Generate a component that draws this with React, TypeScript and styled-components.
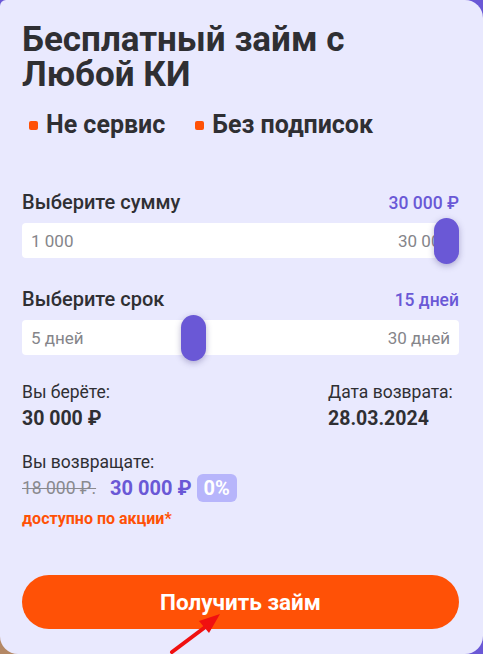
import React, { useState } from "react";
import styled, { createGlobalStyle } from "styled-components";

const GlobalStyle = createGlobalStyle`
  * { box-sizing: border-box; }
  html, body { margin: 0; padding: 0; }
  body {
    font-family: Roboto, "Noto Sans", "Liberation Sans", sans-serif;
    background: #6a58d6;
  }
`;

const ACCENT = "#6a58d6";
const ORANGE = "#ff5106";
const DARK = "#2f2f33";

interface RangeProps {
  label: string;
  value: string;
  min: string;
  max: string;
  percent: number;
}

const RangeField: React.FC<RangeProps> = ({ label, value, min, max, percent }) => (
  <RangeBlock>
    <RangeHead>
      <RangeLabel>{label}</RangeLabel>
      <RangeValue>{value}</RangeValue>
    </RangeHead>
    <Track>
      <TrackText>{min}</TrackText>
      <TrackText>{max}</TrackText>
      <Thumb style={{ left: `calc(${percent}% - ${(percent / 100) * 25}px)` }} />
    </Track>
  </RangeBlock>
);

const App: React.FC = () => {
  const [sum] = useState(100);
  const [term] = useState(38.5);

  return (
    <>
      <GlobalStyle />
      <Page>
        <Card>
          <Title>
            Бесплатный займ с<br />
            Любой КИ
          </Title>
          <Features>
            <Feature>Не сервис</Feature>
            <Feature>Без подписок</Feature>
          </Features>

          <RangeField
            label="Выберите сумму"
            value="30 000 ₽"
            min="1 000"
            max="30 000"
            percent={sum}
          />
          <RangeField
            label="Выберите срок"
            value="15 дней"
            min="5 дней"
            max="30 дней"
            percent={term}
          />

          <Summary>
            <SummaryCol>
              <SummaryLabel>Вы берёте:</SummaryLabel>
              <SummaryValue>30 000 ₽</SummaryValue>
            </SummaryCol>
            <SummaryCol>
              <SummaryLabel>Дата возврата:</SummaryLabel>
              <SummaryValue>28.03.2024</SummaryValue>
            </SummaryCol>
          </Summary>

          <ReturnBlock>
            <SummaryLabel>Вы возвращате:</SummaryLabel>
            <PriceRow>
              <OldPrice>18 000 ₽.</OldPrice>
              <NewPrice>30 000 ₽</NewPrice>
              <Badge>0%</Badge>
            </PriceRow>
            <Promo>доступно по акции*</Promo>
          </ReturnBlock>

          <SubmitButton type="button">Получить займ</SubmitButton>
          <Arrow width="60" height="48" viewBox="0 0 60 48">
            <line x1="4" y1="44" x2="40" y2="17" stroke="#f01010" strokeWidth="4" strokeLinecap="round" />
            <polygon points="52,6 31,13 41,25" fill="#f01010" />
          </Arrow>
        </Card>
      </Page>
    </>
  );
};

const Page = styled.div`
  width: 483px;
  height: 654px;
  background: linear-gradient(45deg, #b48865 0 6%, ${ACCENT} 6%);
  overflow: hidden;
`;

const Card = styled.div`
  position: relative;
  display: flex;
  flex-direction: column;
  width: 100%;
  height: 100%;
  padding: 22px 24px 0 22px;
  background: #e9e9fe;
  border-radius: 6px 18px 18px 18px;
`;

const Title = styled.h1`
  margin: 0;
  font-size: 35px;
  line-height: 35px;
  font-weight: 700;
  color: ${DARK};
`;

const Features = styled.div`
  display: flex;
  gap: 30px;
  margin: 18px 0 0 7px;
`;

const Feature = styled.span`
  display: flex;
  align-items: center;
  gap: 8px;
  font-size: 25px;
  line-height: 30px;
  font-weight: 700;
  color: ${DARK};
  &::before {
    content: "";
    width: 9px;
    height: 9px;
    border-radius: 2px;
    background: ${ORANGE};
  }
`;

const RangeBlock = styled.div`
  display: flex;
  flex-direction: column;
  gap: 8px;
  margin-top: 50px;
  & + & {
    margin-top: 29px;
  }
`;

const RangeHead = styled.div`
  display: flex;
  justify-content: space-between;
  align-items: baseline;
`;

const RangeLabel = styled.span`
  font-size: 20px;
  line-height: 24px;
  font-weight: 500;
  color: ${DARK};
`;

const RangeValue = styled.span`
  font-size: 17.5px;
  line-height: 24px;
  font-weight: 500;
  color: ${ACCENT};
`;

const Track = styled.div`
  position: relative;
  display: flex;
  justify-content: space-between;
  align-items: center;
  height: 35px;
  padding: 0 9px;
  background: #fff;
  border-radius: 4px;
`;

const TrackText = styled.span`
  font-size: 17px;
  color: #85858a;
`;

const Thumb = styled.span`
  position: absolute;
  top: -5px;
  width: 25px;
  height: 46px;
  border-radius: 13px;
  background: ${ACCENT};
  box-shadow: 0 2px 6px rgba(60, 50, 120, 0.35);
`;

const Summary = styled.div`
  display: grid;
  grid-template-columns: 306px 1fr;
  margin-top: 26px;
`;

const SummaryCol = styled.div`
  display: flex;
  flex-direction: column;
  gap: 4px;
`;

const SummaryLabel = styled.span`
  font-size: 17.5px;
  line-height: 22px;
  color: ${DARK};
`;

const SummaryValue = styled.span`
  font-size: 19.5px;
  line-height: 24px;
  font-weight: 700;
  color: ${DARK};
`;

const ReturnBlock = styled.div`
  display: flex;
  flex-direction: column;
  margin-top: 20px;
`;

const PriceRow = styled.div`
  display: flex;
  align-items: center;
  margin-top: 1px;
`;

const OldPrice = styled.span`
  font-size: 17.5px;
  line-height: 24px;
  color: #8a8a8f;
  text-decoration: line-through;
`;

const NewPrice = styled.span`
  margin-left: 14px;
  font-size: 20px;
  line-height: 24px;
  font-weight: 700;
  color: ${ACCENT};
`;

const Badge = styled.span`
  margin-left: 5px;
  padding: 0 7px;
  border-radius: 6px;
  background: #b7b5fb;
  font-size: 20px;
  line-height: 28px;
  font-weight: 700;
  color: #fff;
`;

const Promo = styled.span`
  margin-top: 7px;
  font-size: 16px;
  line-height: 20px;
  font-weight: 700;
  color: ${ORANGE};
`;

const SubmitButton = styled.button`
  margin-top: 46px;
  height: 54px;
  border: none;
  border-radius: 27px;
  background: ${ORANGE};
  font-family: inherit;
  font-size: 22.5px;
  font-weight: 700;
  color: #fff;
  cursor: pointer;
`;

const Arrow = styled.svg`
  position: absolute;
  left: 168px;
  top: 608px;
`;

export default App;
